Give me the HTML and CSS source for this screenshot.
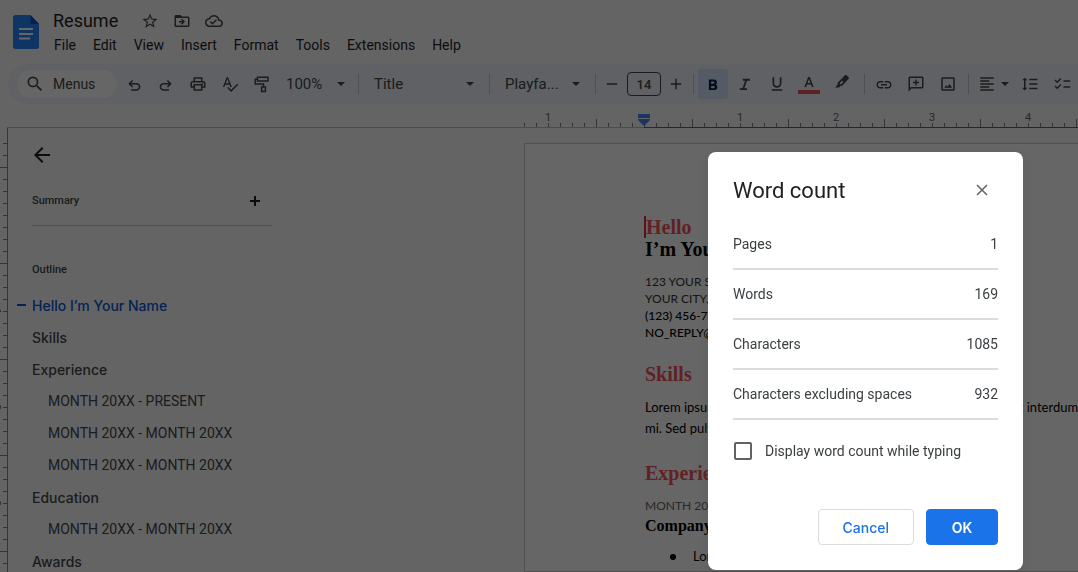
FILE: index.html
```html
<!DOCTYPE html>
<html lang="en">
<head>
  <meta charset="utf-8">
  <meta name="viewport" content="width=device-width, initial-scale=1">
  <title>Resume</title>
  <link rel="stylesheet" href="styles.css">
</head>
<body>
  <div class="app">
    <header class="header">
      <svg class="logo" viewBox="0 0 26 34">
        <path fill="#2684fc" d="M2.500 0H17.500L26 9v22.500a2.500 2.500 0 0 1-2.500 2.500h-21A2.500 2.500 0 0 1 0 31.500v-29A2.500 2.500 0 0 1 2.500 0z"/>
        <path fill="#0057cc" d="M17.500 0L26 9h-8.500z"/>
        <path fill="#fff" d="M6 13h14v2H6zM6 18h14v2H6zM6 22.500h11v2H6z"/>
      </svg>
      <div class="header-main">
        <div class="title-row">
          <span class="doc-title">Resume</span>
          <button class="title-btn" aria-label="Star"><svg viewBox="0 0 24 24"><path d="M22 9.240l-7.190-.62L12 2 9.190 8.630 2 9.240l5.460 4.730L5.820 21 12 17.270 18.180 21l-1.630-7.030L22 9.240zM12 15.400l-3.760 2.270 1-4.280-3.320-2.880 4.380-.38L12 6.100l1.710 4.040 4.380.38-3.320 2.880 1 4.280L12 15.400z"/></svg></button>
          <button class="title-btn" aria-label="Move"><svg viewBox="0 0 24 24"><path d="M20 6h-8l-2-2H4c-1.100 0-2 .9-2 2v12c0 1.100.9 2 2 2h16c1.100 0 2-.9 2-2V8c0-1.100-.9-2-2-2zm0 12H4V8h16v10zm-8-1l4-4-4-4-1.400 1.400L12.200 12H8v2h4.200l-1.600 1.600z"/></svg></button>
          <button class="title-btn" aria-label="Saved to Drive"><svg viewBox="0 0 24 24"><path d="M19.350 10.040C18.670 6.590 15.640 4 12 4 9.110 4 6.600 5.640 5.350 8.040 2.340 8.360 0 10.910 0 14c0 3.310 2.690 6 6 6h13c2.760 0 5-2.240 5-5 0-2.640-2.050-4.780-4.650-4.960zM19 18H6c-2.210 0-4-1.790-4-4 0-2.050 1.530-3.760 3.560-3.970l1.070-.11.5-.95C8.080 7.140 9.940 6 12 6c2.620 0 4.880 1.860 5.390 4.430l.3 1.500 1.530.11c1.560.1 2.780 1.410 2.780 2.960 0 1.650-1.350 3-3 3zm-9-3.820l-2.090-2.090L6.500 13.500 10 17l6.010-6.010-1.410-1.410z"/></svg></button>
        </div>
        <nav class="menubar">
          <button>File</button>
          <button>Edit</button>
          <button>View</button>
          <button>Insert</button>
          <button>Format</button>
          <button>Tools</button>
          <button>Extensions</button>
          <button>Help</button>
        </nav>
      </div>
    </header>

    <div class="toolbar">
      <button class="menus"><svg viewBox="0 0 24 24"><path d="M15.500 14h-.79l-.28-.27A6.470 6.470 0 0 0 16 9.500 6.500 6.500 0 1 0 9.500 16c1.610 0 3.090-.59 4.230-1.570l.27.280v.79l5 4.990L20.490 19l-4.990-5zm-6 0a4.500 4.500 0 1 1 0-9 4.500 4.500 0 0 1 0 9z"/></svg>Menus</button>
      <button class="tool" aria-label="Undo"><svg viewBox="0 0 24 24"><path d="M8 21v-2h7c1.900 0 3.500-1.300 3.500-3.250S16.900 12.500 15 12.500H8.200l2.600 2.600L9.400 16.500 4.400 11.500l5-5 1.400 1.400-2.600 2.600H15c3 0 5.500 2.200 5.500 5.250S18 21 15 21z"/></svg></button>
      <button class="tool" aria-label="Redo"><svg viewBox="0 0 24 24"><path d="M16 21v-2H9c-1.900 0-3.500-1.300-3.500-3.250S7.100 12.500 9 12.500h6.800l-2.600 2.600 1.400 1.400 5-5-5-5-1.400 1.400 2.600 2.600H9c-3 0-5.500 2.200-5.500 5.250S6 21 9 21z"/></svg></button>
      <button class="tool" aria-label="Print"><svg viewBox="0 0 24 24"><path d="M19 8h-1V3H6v5H5c-1.660 0-3 1.340-3 3v6h4v4h12v-4h4v-6c0-1.660-1.340-3-3-3zM8 5h8v3H8V5zm8 14H8v-5h8v5zm2-4v-3H6v3H4v-4c0-.55.45-1 1-1h14c.55 0 1 .45 1 1v4h-2z"/><circle cx="18" cy="11.500" r="1"/></svg></button>
      <button class="tool" aria-label="Spelling"><svg viewBox="0 0 24 24"><path d="M12.450 16h2.090L9.430 3H7.570L2.460 16h2.090l1.120-3h5.640l1.140 3zm-6.020-5L8.500 5.480 10.570 11H6.430zm15.160.59l-8.090 8.090L9.830 16l-1.410 1.410 5.090 5.090L23 13l-1.410-1.410z"/></svg></button>
      <button class="tool" aria-label="Paint format"><svg viewBox="0 0 24 24"><path fill="none" stroke="#444746" stroke-width="2" d="M6 3h14v5H6zM6 5.500H3V12h11v4M11.500 16h5v6h-5z"/></svg></button>
      <button class="select zoom">100%<i class="caret"></i></button>
      <span class="sep"></span>
      <button class="select style">Title<i class="caret"></i></button>
      <span class="sep"></span>
      <button class="select font">Playfa...<i class="caret"></i></button>
      <span class="sep sep-tight-right"></span>
      <button class="step" aria-label="Decrease font size"><svg viewBox="0 0 24 24"><path d="M5 11h14v2H5z"/></svg></button>
      <input class="size" type="text" value="14" aria-label="Font size">
      <button class="step" aria-label="Increase font size"><svg viewBox="0 0 24 24"><path d="M19 13h-6v6h-2v-6H5v-2h6V5h2v6h6z"/></svg></button>
      <span class="sep sep-tight"></span>
      <button class="tool active" aria-label="Bold"><svg viewBox="0 0 24 24"><path d="M15.600 12.790c.97-.67 1.650-1.770 1.650-2.790 0-2.260-1.750-4-4-4H6.500v14h7.540c2.090 0 3.710-1.700 3.710-3.790 0-1.520-.86-2.820-2.150-3.420zM9.500 8.500h3a1.500 1.500 0 0 1 0 3h-3v-3zm3.500 9H9.500v-3H13a1.500 1.500 0 0 1 0 3z"/></svg></button>
      <button class="tool" aria-label="Italic"><svg viewBox="0 0 24 24"><path d="M9 5v2.500h3L8.700 17.500H5V20h9.700v-2.500h-3.500L14.500 7.500h4V5z"/></svg></button>
      <button class="tool" aria-label="Underline"><svg viewBox="0 0 24 24"><path d="M12 17c3.310 0 6-2.690 6-6V3h-2.300v8a3.700 3.700 0 0 1-7.400 0V3H6v8c0 3.310 2.690 6 6 6zm-7 2v2h14v-2H5z"/></svg></button>
      <button class="tool" aria-label="Text color"><svg class="wide" viewBox="0 0 24 24"><path d="M11.200 5L7.300 15h1.800l.9-2.400h4l.9 2.400h1.800L12.800 5zm-.7 6.100L12 7l1.500 4.100z"/><path fill="#f2545b" d="M1 18h22v4H1z"/></svg></button>
      <button class="tool" aria-label="Highlight color"><svg class="wide" viewBox="0 0 24 24"><path fill-rule="evenodd" d="M17.800 3.500l1.700 1.700c.6.600.6 1.300 0 1.900l-5.800 6.100c-.6.600-1.400.8-2.100.5l-1.400 1.800H6l2.800-3c-.4-.8-.2-1.600.3-2.200l6.600-6.800c.6-.6 1.500-.6 2.100 0zM13 8.700l-2.500 2.500 1.400 1.400 2.500-2.500z"/></svg></button>
      <span class="sep sep-tight-right"></span>
      <button class="tool" aria-label="Insert link"><svg viewBox="0 0 24 24"><path d="M3.900 13c0-1.710 1.390-3.100 3.100-3.100h4V8H7c-2.760 0-5 2.240-5 5s2.240 5 5 5h4v-1.900H7c-1.710 0-3.100-1.390-3.100-3.100zM8 14h8v-2H8v2zm9-6h-4v1.900h4c1.710 0 3.100 1.390 3.100 3.100s-1.390 3.100-3.100 3.100h-4V18h4c2.760 0 5-2.240 5-5s-2.240-5-5-5z"/></svg></button>
      <button class="tool" aria-label="Add comment"><svg viewBox="0 0 24 24"><path d="M20 2H4c-1.100 0-2 .9-2 2v18l4-4h14c1.100 0 2-.9 2-2V4c0-1.100-.9-2-2-2zm0 14H5.170L4 17.170V4h16v12zm-9-2h2v-3h3V9h-3V6h-2v3H8v2h3z"/></svg></button>
      <button class="tool" aria-label="Insert image"><svg viewBox="0 0 24 24"><path d="M19 3H5c-1.100 0-2 .9-2 2v14c0 1.100.9 2 2 2h14c1.100 0 2-.9 2-2V5c0-1.100-.9-2-2-2zm0 16H5V5h14v14zM7 17l2.500-3.500 1.800 2.200L14 12l3.500 5z"/></svg></button>
      <span class="sep sep-tight"></span>
      <button class="align" aria-label="Align"><svg viewBox="0 0 24 24"><path d="M15 15H3v2h12v-2zm0-8H3v2h12V7zM3 13h18v-2H3v2zm0 8h18v-2H3v2zM3 3v2h18V3H3z"/></svg><i class="caret"></i></button>
      <button class="tool" aria-label="Line spacing"><svg viewBox="0 0 24 24"><path d="M6 7h2.500L5 3.500 1.500 7H4v10H1.500L5 20.500 8.500 17H6V7zm5-2v2h11V5H11zm0 14h11v-2H11v2zm0-6h11v-2H11v2z"/></svg></button>
      <button class="tool" aria-label="Checklist"><svg viewBox="0 0 24 24"><path d="M23 7h-9v2h9V7zm0 8h-9v2h9v-2zM5.540 11L2 7.460l1.410-1.410 2.120 2.120 4.240-4.240 1.410 1.410L5.540 11zm0 8L2 15.460l1.410-1.410 2.120 2.120 4.240-4.240 1.410 1.410L5.540 19z"/></svg></button>
    </div>

    <div class="ruler">
      <div class="ruler-margin"><span>1</span></div>
      <div class="ruler-text">
        <svg class="indent" viewBox="0 0 12 13"><path fill="#4285f4" d="M0 0h12v4H0zM0 5h12v1L6 12 0 6z"/></svg>
        <span>1</span><span>2</span><span>3</span><span>4</span>
      </div>
    </div>

    <div class="workspace">
      <div class="vruler"><span>1</span><span>2</span><span>3</span></div>
      <aside class="outline">
        <button class="back" aria-label="Close outline"><svg viewBox="0 0 24 24"><path d="M20 11H7.830l5.590-5.590L12 4l-8 8 8 8 1.410-1.410L7.830 13H20v-2z"/></svg></button>
        <div class="summary">
          <h2>Summary</h2>
          <button class="add" aria-label="Add summary"><svg viewBox="0 0 10 10"><path d="M4 0h2v4h4v2H6v4H4V6H0V4h4z"/></svg></button>
        </div>
        <h2>Outline</h2>
        <ul>
          <li class="current"><a href="#hello">Hello I’m Your Name</a></li>
          <li><a href="#skills">Skills</a></li>
          <li><a href="#experience">Experience</a></li>
          <li class="sub"><a href="#experience">MONTH 20XX - PRESENT</a></li>
          <li class="sub"><a href="#experience">MONTH 20XX - MONTH 20XX</a></li>
          <li class="sub"><a href="#experience">MONTH 20XX - MONTH 20XX</a></li>
          <li><a href="#education">Education</a></li>
          <li class="sub"><a href="#education">MONTH 20XX - MONTH 20XX</a></li>
          <li><a href="#awards">Awards</a></li>
        </ul>
      </aside>
      <main class="page">
        <h1 id="hello"><span class="red">Hello</span><br>I’m Your Name</h1>
        <p class="address">123 YOUR STREET<br>YOUR CITY, ST 12345<br><b>(123) 456-7890</b><br><b>NO_REPLY@EXAMPLE.COM</b></p>
        <h3 id="skills">Skills</h3>
        <p class="text">Lorem ipsum dolor sit amet, consectetur adipiscing elit. Donec erat interdum<br>mi. Sed pulvinar</p>
        <h3 id="experience">Experience</h3>
        <p class="date">MONTH 20XX - PRESENT</p>
        <h4>Company Name, Location</h4>
        <ul class="text">
          <li>Lorem ipsum dolor sit amet</li>
        </ul>
      </main>
    </div>
  </div>

  <div class="overlay">
    <form class="dialog" role="dialog" aria-labelledby="dialog-title">
      <div class="dialog-head">
        <h2 id="dialog-title">Word count</h2>
        <button type="button" class="close" aria-label="Close"><svg viewBox="0 0 12 12"><path d="M1 1l10 10M11 1L1 11"/></svg></button>
      </div>
      <table class="counts">
        <tr><th scope="row">Pages</th><td>1</td></tr>
        <tr><th scope="row">Words</th><td>169</td></tr>
        <tr><th scope="row">Characters</th><td>1085</td></tr>
        <tr><th scope="row">Characters excluding spaces</th><td>932</td></tr>
      </table>
      <label class="check"><input type="checkbox">Display word count while typing</label>
      <div class="actions">
        <button type="button" class="btn">Cancel</button>
        <button type="button" class="btn primary">OK</button>
      </div>
    </form>
  </div>
</body>
</html>
```
FILE: styles.css
```css
* { box-sizing: border-box; }
body { margin: 0; height: 100vh; overflow: hidden; background: #fafbfd; font-family: Roboto, sans-serif; font-size: 14px; color: #1f1f1f; }
button { border: none; background: none; padding: 0; font: inherit; color: inherit; display: flex; align-items: center; justify-content: center; flex: none; }
svg { display: block; fill: #444746; }
h1, h2, h3, h4, p, ul { margin: 0; padding: 0; }
.app { height: 100vh; overflow: hidden; display: flex; flex-direction: column; }

/* header */
.header { display: flex; flex: none; height: 64px; padding: 8px 13px 0; gap: 7px; }
.logo { width: 26px; height: 34px; margin-top: 7px; }
.title-row { display: flex; align-items: center; height: 25px; padding-left: 7px; }
.doc-title { font-size: 18px; margin-right: 16px; }
.title-btn { width: 32px; height: 24px; }
.title-btn svg { width: 18px; height: 18px; }
.menubar { display: flex; gap: 1px; height: 24px; }
.menubar button { padding: 0 8px; }

/* toolbar */
.toolbar { display: flex; flex: none; align-items: center; height: 40px; margin-left: 8px; padding-left: 9px; border-radius: 20px 0 0 20px; background: #edf2fa; overflow: hidden; color: #444746; }
.menus { width: 100px; height: 28px; justify-content: flex-start; margin-right: 1px; gap: 8px; padding-left: 8px; border-radius: 14px; background: #fff; }
.menus svg { width: 20px; height: 20px; }
.tool { width: 30px; height: 30px; margin: 0 1px; border-radius: 4px; }
.tool svg, .align svg { width: 18px; height: 18px; }
.tool .wide { width: 24px; height: 24px; }
.tool.active { background: #d3e3fd; }
.tool.active svg { fill: #041e49; }
.select { height: 30px; justify-content: space-between; padding: 0 8px; font-size: 15px; }
.zoom { width: 73px; padding-right: 6px; }
.style { width: 116px; }
.font { width: 91px; }
.caret { width: 8px; border: 4px solid transparent; border-top-color: #444746; border-bottom: none; }
.sep { flex: none; width: 1px; height: 20px; margin: 0 7px; background: #c7c7c7; }
.sep-tight { margin: 0 3px 0 4px; }
.sep-tight-right { margin-right: 3px; }
.step { width: 26px; height: 24px; }
.step svg { width: 18px; height: 18px; }
.size { flex: none; width: 34px; height: 24px; margin: 0 2px; border: 1px solid #444746; border-radius: 4px; background: none; font: 500 13px Roboto, sans-serif; color: #444746; text-align: center; padding: 0; }
.align { width: 42px; height: 30px; gap: 5px; }

/* rulers: one tick every 12px, a long one on the half inch */
.ruler { display: flex; flex: none; height: 24px; margin-left: 7px; padding-left: 517px; border-bottom: 1px solid #bdbdbd; font-size: 11px; line-height: 12px; color: #5f6368; }
.ruler-margin, .ruler-text { padding-top: 8px; background-position: 0 100%; background-size: 100% 4px, 100% 8px; background-repeat: no-repeat; }
.ruler-margin { flex: none; width: 120px; padding-left: 21px; background-image: repeating-linear-gradient(90deg, #80868b 0 1px, transparent 1px 12px), linear-gradient(90deg, transparent 72px, #80868b 72px 73px, transparent 73px); }
.ruler-text { position: relative; display: flex; flex: 1; min-width: 0; margin-bottom: -1px; padding-left: 48px; border-bottom: 1px solid #5f6368; background-image: repeating-linear-gradient(90deg, #80868b 0 1px, transparent 1px 12px), repeating-linear-gradient(90deg, transparent 0 48px, #80868b 48px 49px, transparent 49px 96px); }
.ruler-text span { flex: none; width: 96px; text-align: center; }
.indent { position: absolute; left: -6px; top: 10px; width: 12px; height: 13px; }

.workspace { display: flex; flex: 1; min-height: 0; }
.vruler { flex: none; width: 8px; padding-top: 135px; overflow: hidden; border-right: 1px solid #80868b; font-size: 11px; color: #5f6368;
  background: repeating-linear-gradient(180deg, #80868b 0 1px, transparent 1px 12px) 100% 15px / 4px 100% no-repeat, repeating-linear-gradient(180deg, transparent 0 39px, #80868b 39px 40px, transparent 40px 96px) 0 0 / 100% 100% no-repeat; }
.vruler span { display: flex; justify-content: center; height: 96px; width: 12px; margin-left: -9px; writing-mode: vertical-rl; }

/* outline */
.outline { flex: none; width: 516px; padding: 16px 24px 0; overflow: hidden; }
.outline h2 { font-size: 11px; line-height: 14px; font-weight: 500; color: #444746; }
.back { width: 20px; height: 22px; }
.back svg { width: 24px; height: 24px; fill: #1f1f1f; flex: none; }
.summary { display: flex; align-items: center; justify-content: space-between; width: 240px; height: 60px; margin-bottom: 37px; padding: 10px 12px 0 0; border-bottom: 1px solid #c7c7c7; }
.add svg { width: 10px; height: 10px; fill: #1f1f1f; }
.outline ul { list-style: none; padding-top: 12px; }
.outline li { display: flex; align-items: center; height: 32px; font: 500 14px Inter, sans-serif; }
.outline a { color: #444746; text-decoration: none; }
.outline .sub { padding-left: 16px; font: 400 14px Roboto, sans-serif; }
.outline .current::before { content: ""; width: 9px; height: 2px; margin: 0 6px 0 -15px; background: #0b57d0; }
.outline .current a { color: #0b57d0; }

/* document */
.page { flex: none; width: 816px; margin-top: 15px; padding: 72px 120px 0; border: 1px solid #c7c7c7; background: #fff; font-family: Lato, sans-serif; color: #000; }
.page h1, .page h3, .page h4 { font-family: "Liberation Serif", serif; font-weight: 700; font-size: 20px; line-height: 22px; }
.page h3, .red { color: #f2545b; }
.red { border-left: 2px solid #d33; margin-left: -1px; }
.address { margin: 13px 0 22px; font-size: 12px; line-height: 17px; color: #333; }
.address b { font-weight: 500; color: #000; }
.text { font-size: 13px; line-height: 21px; white-space: nowrap; }
p.text { margin: 12px 0 23px; }
.date { margin-top: 12px; font-size: 12px; line-height: 20px; color: #666; }
.page h4 { font-size: 16px; line-height: 20px; }
ul.text { margin-top: 10px; padding-left: 25px; list-style: none; }
ul.text li { display: flex; align-items: center; gap: 17px; }
ul.text li::before { content: ""; width: 6px; height: 6px; border-radius: 50%; background: #000; }

/* dialog */
.overlay { position: fixed; inset: 0; background: rgba(0,0,0,0.6); }
.dialog { position: absolute; top: 152px; right: 55px; width: 315px; padding: 24px 25px 25px; border-radius: 8px; background: #fff; box-shadow: 0 4px 8px 3px rgba(60,64,67,0.15); color: #3c4043; }
.dialog-head { display: flex; align-items: center; justify-content: space-between; height: 28px; margin-bottom: 16px; padding-right: 10px; }
.dialog-head h2 { font-size: 22px; font-weight: 400; color: #202124; }
.close svg { width: 12px; height: 12px; fill: none; stroke: #5f6368; stroke-width: 1.5; }
.counts { width: 100%; border-collapse: separate; border-spacing: 0; }
.counts th, .counts td { height: 50px; padding: 0; border-bottom: 2px solid #dadce0; font-weight: 400; text-align: left; }
.counts td { text-align: right; }
.check { display: flex; align-items: center; gap: 13px; height: 20px; margin: 21px 0 48px 1px; }
.check input { appearance: none; width: 18px; height: 18px; margin: 0; border: 2px solid #5f6368; border-radius: 2px; }
.actions { display: flex; justify-content: flex-end; gap: 12px; }
.btn { min-width: 72px; height: 36px; padding: 0 24px; border: 1px solid #dadce0; border-radius: 4px; font: 500 14px Inter, sans-serif; color: #1a73e8; }
.primary { border-color: #1a73e8; background: #1a73e8; font-weight: 600; color: #fff; }
```
